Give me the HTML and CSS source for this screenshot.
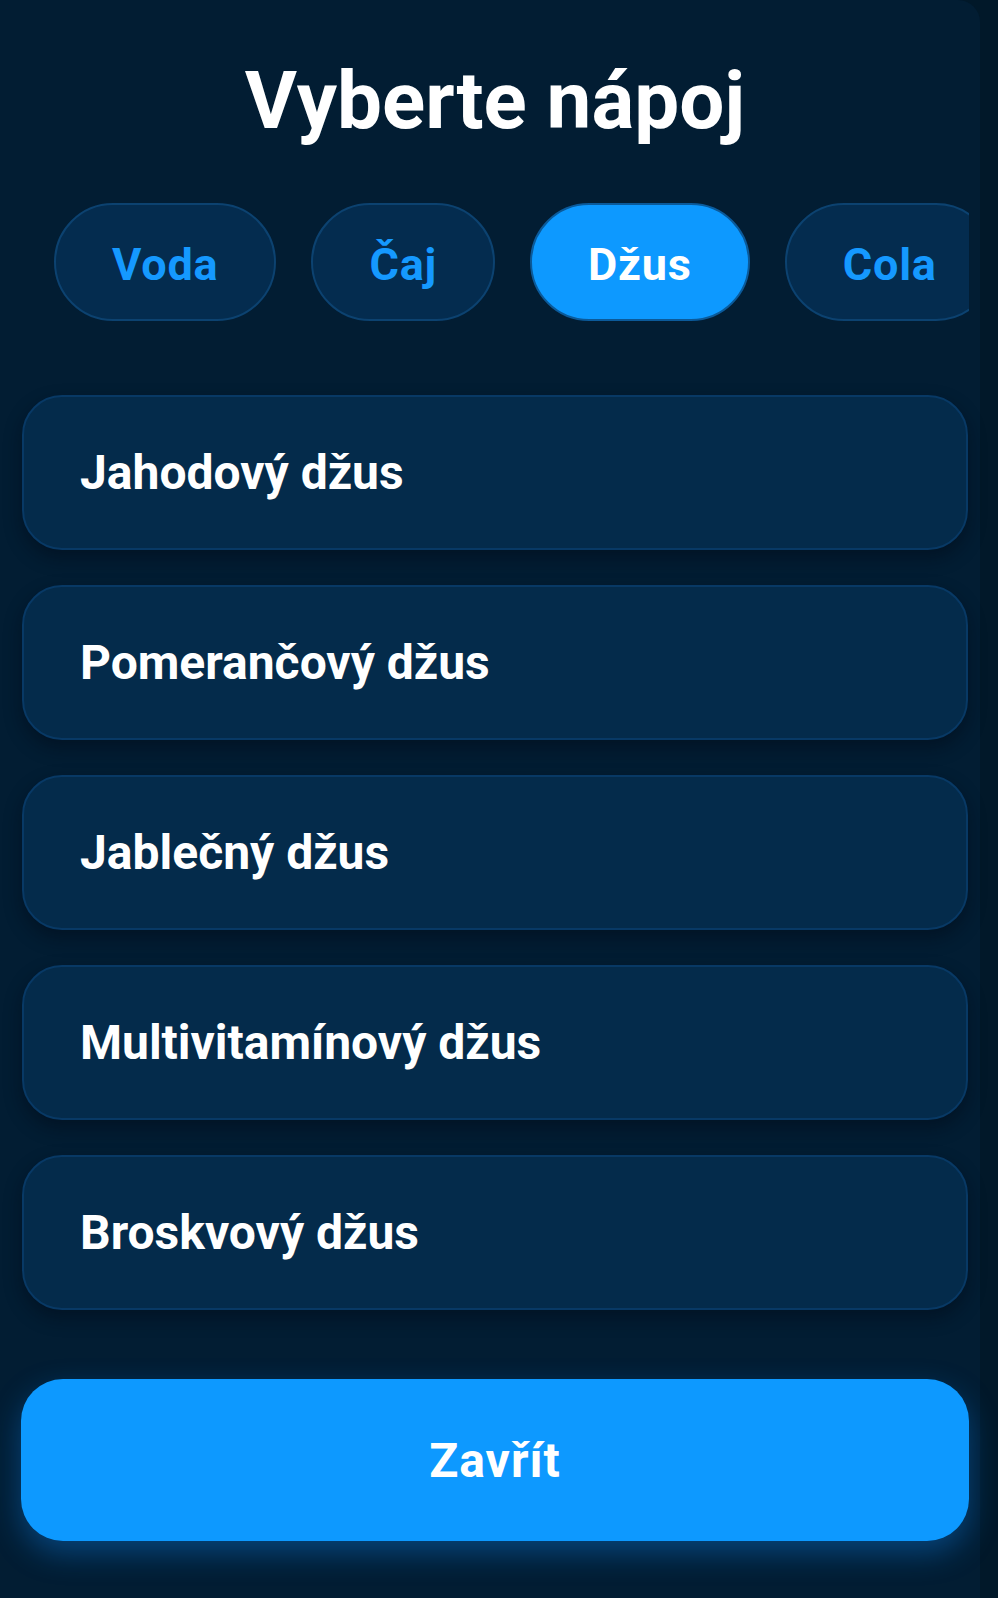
FILE: index.html
```html
<!DOCTYPE html>
<html lang="cs">
<head>
<meta charset="utf-8">
<title>Vyberte nápoj</title>
<link rel="stylesheet" href="styles.css">
</head>
<body>
<div class="sheet">
  <h1 class="title">Vyberte nápoj</h1>
  <div class="tabs">
    <div class="tab-track">
      <button class="chip">Voda</button>
      <button class="chip">Čaj</button>
      <button class="chip chip-active">Džus</button>
      <button class="chip">Cola</button>
    </div>
  </div>
  <ul class="list">
    <li class="item">Jahodový džus</li>
    <li class="item">Pomerančový džus</li>
    <li class="item">Jablečný džus</li>
    <li class="item">Multivitamínový džus</li>
    <li class="item">Broskvový džus</li>
  </ul>
  <button class="close">Zavřít</button>
</div>
</body>
</html>
```

FILE: styles.css
```css
html, body {
  margin: 0;
  padding: 0;
}
body {
  width: 998px;
  height: 1598px;
  background: #011829;
  font-family: Roboto, "Noto Sans", "Liberation Sans", sans-serif;
  overflow: hidden;
}
.sheet {
  width: 946px;
  height: 1598px;
  box-sizing: content-box;
  padding: 0 12px 0 22px;
  margin-right: 18px;
  background: #021d33;
  border-top-right-radius: 22px;
}
.title {
  margin: 0;
  padding-top: 54px;
  height: 94px;
  line-height: 94px;
  font-size: 80px;
  font-weight: 700;
  color: #ffffff;
  text-align: center;
  width: 946px;
}
.tabs {
  margin-top: 55px;
  width: 947px;
  overflow: hidden;
}
.tab-track {
  display: flex;
  gap: 35px;
  padding-left: 32px;
  width: max-content;
}
.chip {
  height: 118px;
  padding: 4px 56px 0;
  border-radius: 59px;
  border: 2px solid #0c4270;
  background: #042c4f;
  color: #1599ff;
  font-family: Roboto, "Noto Sans", "Liberation Sans", sans-serif;
  font-size: 45px;
  font-weight: 700;
  letter-spacing: 0.8px;
  box-sizing: border-box;
  white-space: nowrap;
}
.chip-active {
  background: #0d99ff;
  border-color: #0b5a9a;
  color: #ffffff;
}
.list {
  list-style: none;
  margin: 74px 0 0 0;
  padding: 0;
  width: 946px;
  display: flex;
  flex-direction: column;
  gap: 35px;
}
.item {
  height: 155px;
  box-sizing: border-box;
  display: flex;
  align-items: center;
  padding-left: 56px;
  border-radius: 40px;
  border: 2px solid #083965;
  background: #042b4b;
  color: #ffffff;
  font-size: 48px;
  font-weight: 700;
  box-shadow: 0 8px 18px rgba(0, 8, 20, 0.45);
}
.close {
  display: block;
  margin-top: 69px;
  width: 948px;
  margin-left: -1px;
  height: 162px;
  border: none;
  border-radius: 42px;
  background: #0d99ff;
  color: #ffffff;
  font-family: Roboto, "Noto Sans", "Liberation Sans", sans-serif;
  font-size: 48px;
  font-weight: 700;
  letter-spacing: 1px;
  box-shadow: 0 12px 30px rgba(13, 140, 255, 0.35);
}
```
